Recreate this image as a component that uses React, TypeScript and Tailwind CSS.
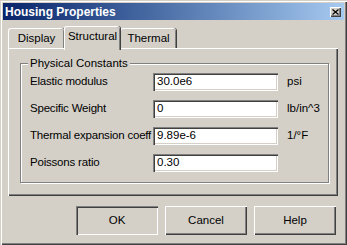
const FONT = { fontFamily: '"Liberation Sans", Arial, sans-serif' };

const RAISED =
  "shadow-[inset_1px_1px_#ffffff,inset_-1px_-1px_#404040,inset_-2px_-2px_#808080]";
const SUNKEN =
  "shadow-[inset_1px_1px_#808080,inset_2px_2px_#404040,inset_-1px_-1px_#ffffff,inset_-2px_-2px_#d4d0c8]";

const FIELDS = [
  { label: "Elastic modulus", value: "30.0e6", unit: "psi" },
  { label: "Specific Weight", value: "0", unit: "lb/in^3" },
  { label: "Thermal expansion coeff", value: "9.89e-6", unit: "1/°F" },
  { label: "Poissons ratio", value: "0.30", unit: "" },
];

function Tab({ label, active }: { label: string; active?: boolean }) {
  return (
    <div
      className={`flex items-center justify-center w-[56px] border-l border-t border-white rounded-tl-[3px] rounded-tr-[3px] bg-[#d4d0c8] shadow-[inset_-1px_0_#808080,1px_0_#404040] ${
        active ? "relative z-10 h-[24px] pb-[3px]" : "mt-[2px] h-[20px]"
      }`}
    >
      <span className="text-[11.5px] text-black leading-none">{label}</span>
    </div>
  );
}

export default function App() {
  return (
    <div
      className="w-[347px] h-[245px] flex flex-col p-[3px] bg-[#d4d0c8] shadow-[inset_1px_1px_#d4d0c8,inset_2px_2px_#ffffff,inset_-1px_-1px_#404040,inset_-2px_-2px_#808080]"
      style={FONT}
    >
      <div className="h-[17px] flex items-center justify-between pl-[2px] pr-[3px] bg-gradient-to-r from-[#0a246a] to-[#a6caf0]">
        <span className="text-white font-bold text-[12px] leading-none">Housing Properties</span>
        <div className={`w-[11px] h-[10px] flex items-center justify-center bg-[#d4d0c8] ${RAISED}`}>
          <svg width="7" height="6" viewBox="0 0 7 6">
            <path d="M0.5 0.5 L6.5 5.5 M6.5 0.5 L0.5 5.5" stroke="#000" strokeWidth="1.2" />
          </svg>
        </div>
      </div>

      <div className="flex flex-col px-[5px]">
        <div className="flex items-start h-[22px] mt-[6px]">
          <Tab label="Display" />
          <Tab label="Structural" active />
          <Tab label="Thermal" />
        </div>

        <div className={`w-[330px] h-[148px] flex flex-col ${RAISED}`}>
          <div className="relative mt-[15px] ml-[12px] mr-[9px] h-[120px] border border-[#808080] shadow-[inset_1px_1px_#ffffff,1px_1px_#ffffff]">
            <span className="absolute -top-[8px] left-[7px] px-[2px] bg-[#d4d0c8] text-[11.5px] leading-[14px] text-black">
              Physical Constants
            </span>
            <div className="flex flex-col gap-[9px] pt-[9px] pl-[9px]">
              {FIELDS.map((f) => (
                <div key={f.label} className="flex items-center h-[18px]">
                  <span className="w-[123px] text-[11.5px] text-black whitespace-nowrap tracking-[-0.2px]">{f.label}</span>
                  <div className={`w-[125px] h-[18px] flex items-center pl-[4px] bg-white ${SUNKEN}`}>
                    <span className="text-[11.5px] text-black leading-none">{f.value}</span>
                  </div>
                  <span className="ml-[9px] text-[11.5px] text-black">{f.unit}</span>
                </div>
              ))}
            </div>
          </div>
        </div>

        <div className="flex justify-end gap-[7px] mt-[10px] pr-[3px]">
          <button className={`w-[82px] h-[29px] text-[11.5px] text-black bg-[#d4d0c8] ${SUNKEN}`}>OK</button>
          <button className={`w-[82px] h-[29px] text-[11.5px] text-black bg-[#d4d0c8] ${RAISED}`}>Cancel</button>
          <button className={`w-[82px] h-[29px] text-[11.5px] text-black bg-[#d4d0c8] ${RAISED}`}>Help</button>
        </div>
      </div>
    </div>
  );
}
